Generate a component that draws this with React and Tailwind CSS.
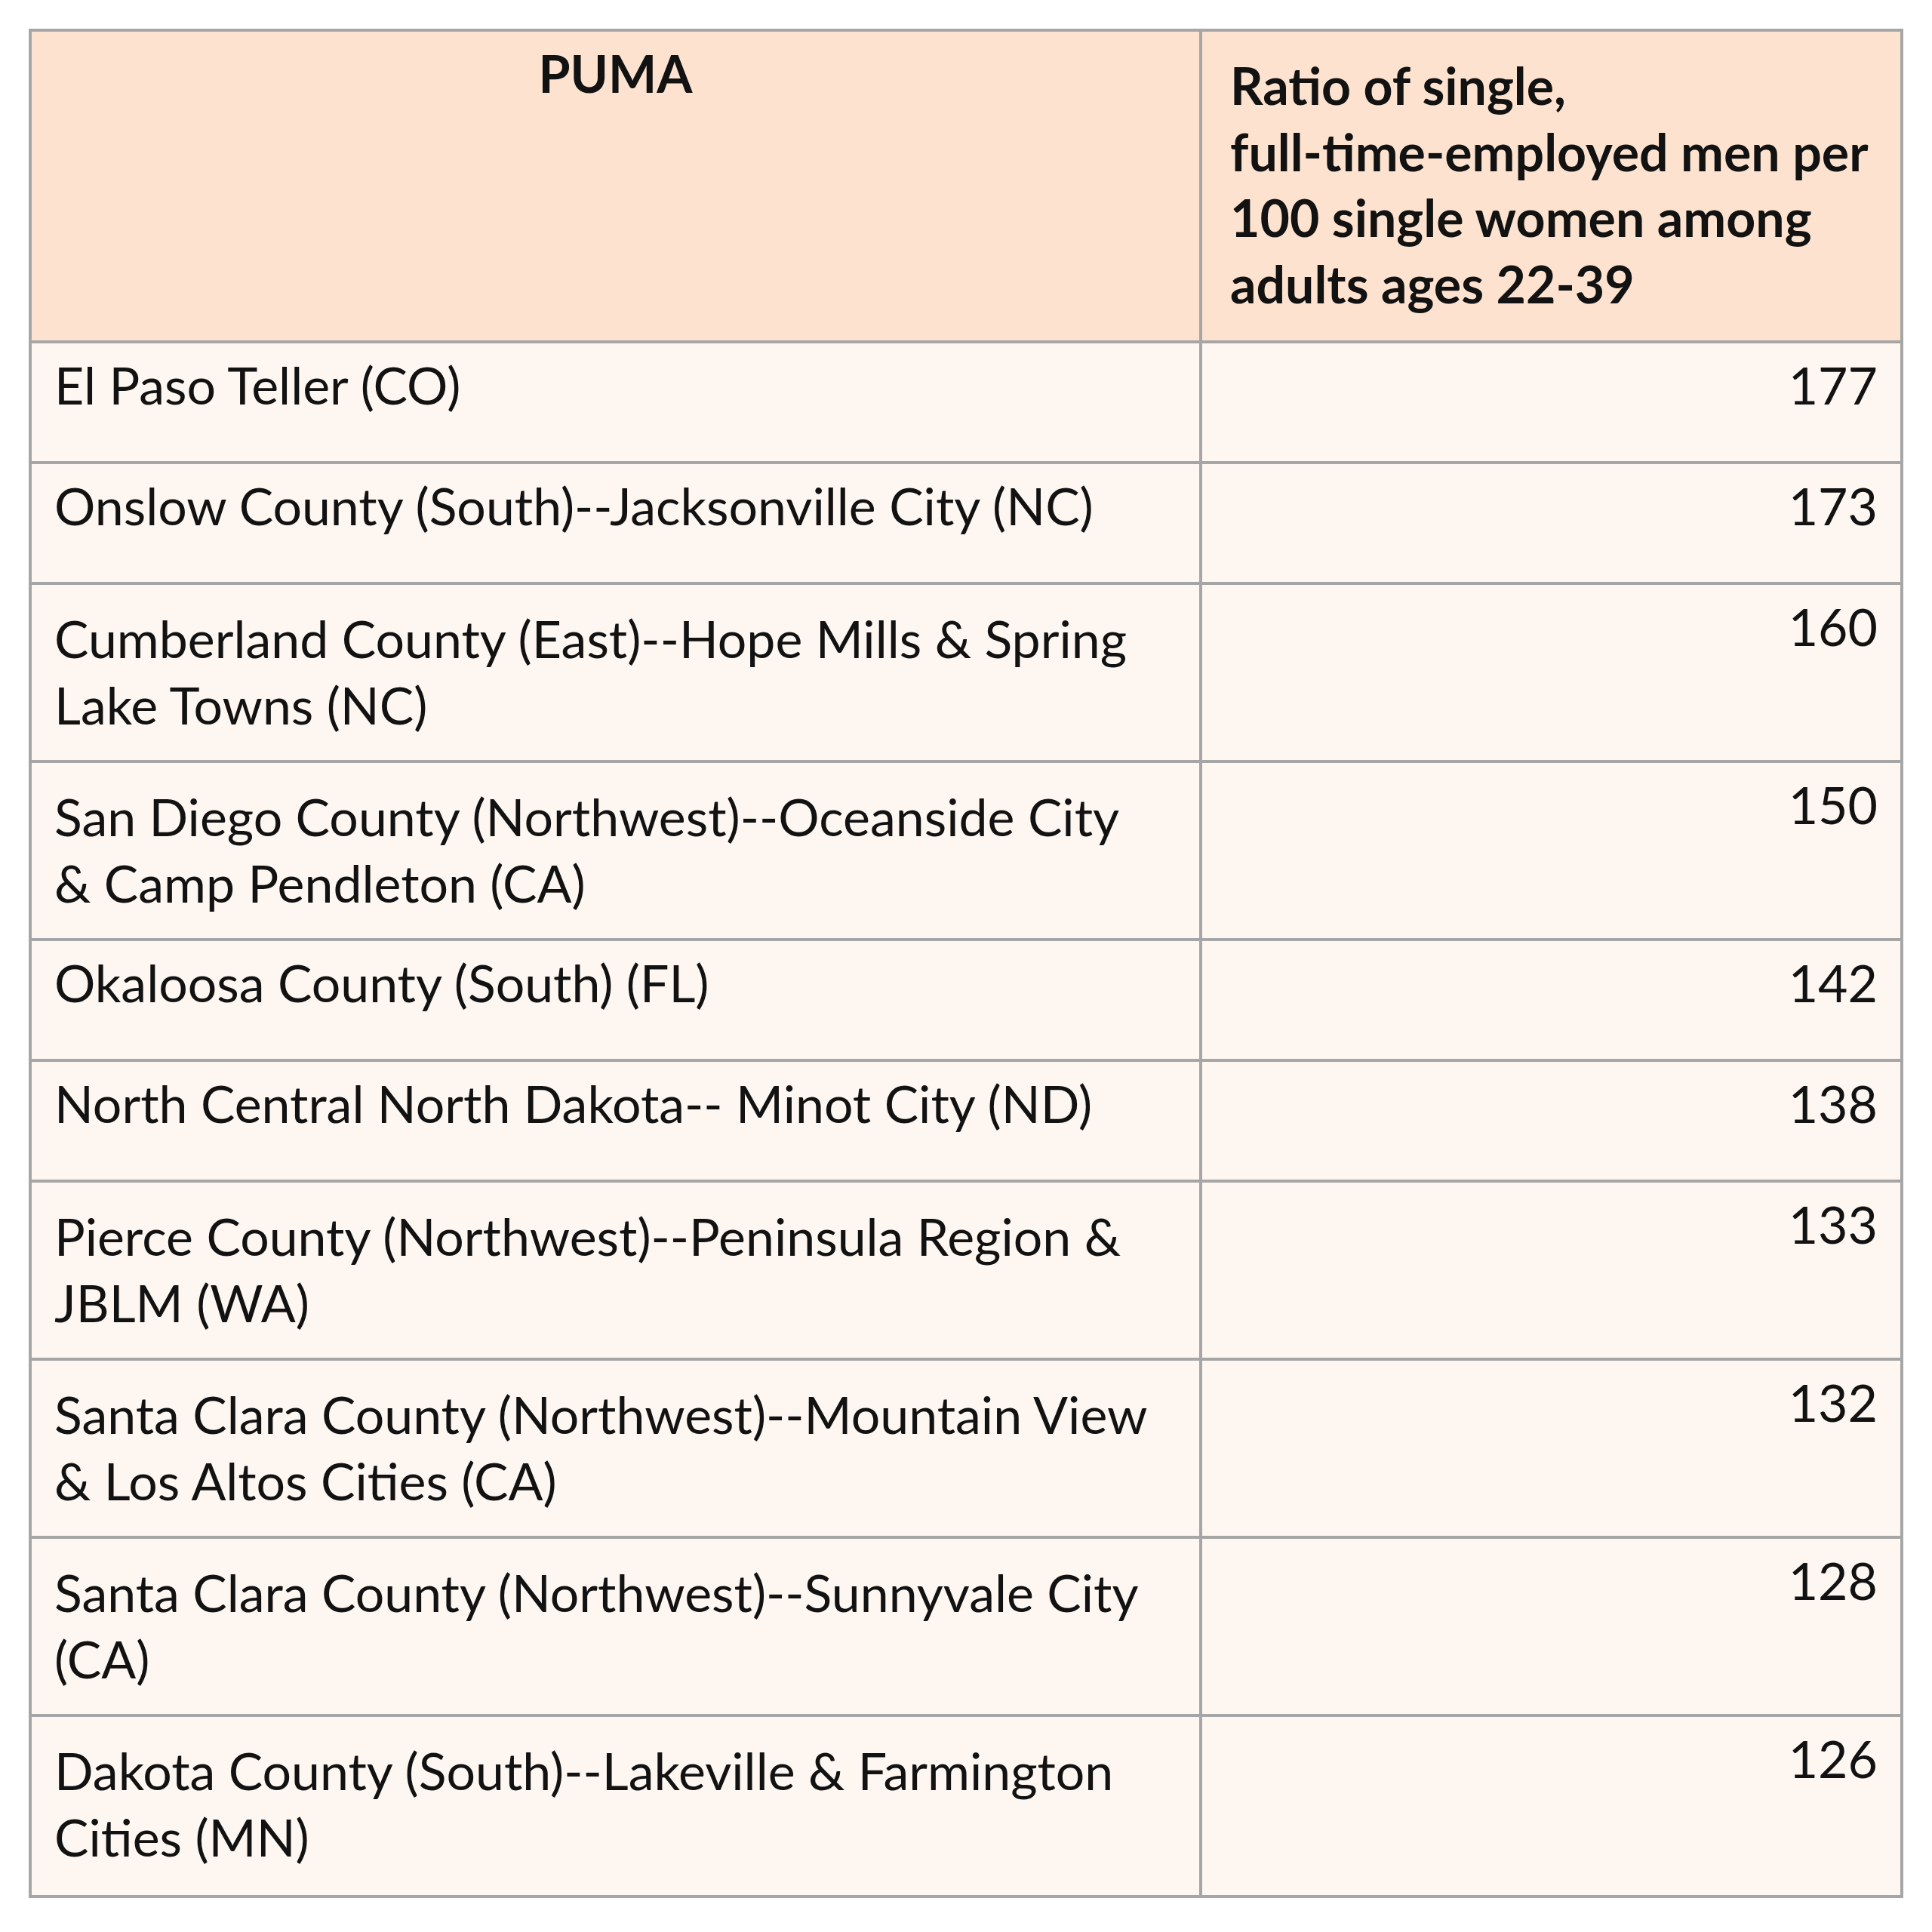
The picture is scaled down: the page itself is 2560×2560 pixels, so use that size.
import React from "react";

const rows = [
  { name: "El Paso Teller (CO)", value: 177, lines: 1 },
  { name: "Onslow County (South)--Jacksonville City (NC)", value: 173, lines: 1 },
  { name: "Cumberland County (East)--Hope Mills & Spring Lake Towns (NC)", value: 160, lines: 2 },
  { name: "San Diego County (Northwest)--Oceanside City & Camp Pendleton (CA)", value: 150, lines: 2 },
  { name: "Okaloosa County (South) (FL)", value: 142, lines: 1 },
  { name: "North Central North Dakota-- Minot City (ND)", value: 138, lines: 1 },
  { name: "Pierce County (Northwest)--Peninsula Region & JBLM (WA)", value: 133, lines: 2 },
  { name: "Santa Clara County (Northwest)--Mountain View & Los Altos Cities (CA)", value: 132, lines: 2 },
  { name: "Santa Clara County (Northwest)--Sunnyvale City (CA)", value: 128, lines: 2 },
  { name: "Dakota County (South)--Lakeville & Farmington Cities (MN)", value: 126, lines: 2 },
];

const App = () => {
  return (
    <div className="bg-white pt-[38px] pl-[38px] pb-[40px] font-['Lato','Noto_Sans',sans-serif] text-[68px] leading-[87.5px] text-[#121212]">
      <div className="w-[2484px] border-[4px] border-[#a6a6a6]">
        {/* header */}
        <div className="flex h-[413px] bg-[#fde3cf] border-b-[4px] border-[#a6a6a6] font-bold">
          <div className="w-[1551px] shrink-0 border-r-[4px] border-[#a6a6a6] pt-[11px] text-center">
            PUMA
          </div>
          <div className="flex-1 pt-[27px] pl-[37px] pr-[29px]">
            Ratio of single,
            <br />
            full-time-employed men per 100 single women among adults ages 22-39
          </div>
        </div>

        {rows.map((row, i) => (
          <div
            key={row.name}
            className={
              "flex bg-[#fdf6f1] " +
              (row.lines === 2 ? "h-[236px] " : "h-[160px] ") +
              (i < rows.length - 1 ? "border-b-[4px] border-[#a6a6a6]" : "")
            }
          >
            <div
              className={
                "w-[1551px] shrink-0 border-r-[4px] border-[#a6a6a6] pl-[30px] pr-[62px] " +
                (row.lines === 2 ? "pt-[27px]" : "pt-[11px]")
              }
            >
              {row.name}
            </div>
            <div className="flex-1 pt-[11px] pr-[30px] text-right">{row.value}</div>
          </div>
        ))}
      </div>
    </div>
  );
};

export default App;
